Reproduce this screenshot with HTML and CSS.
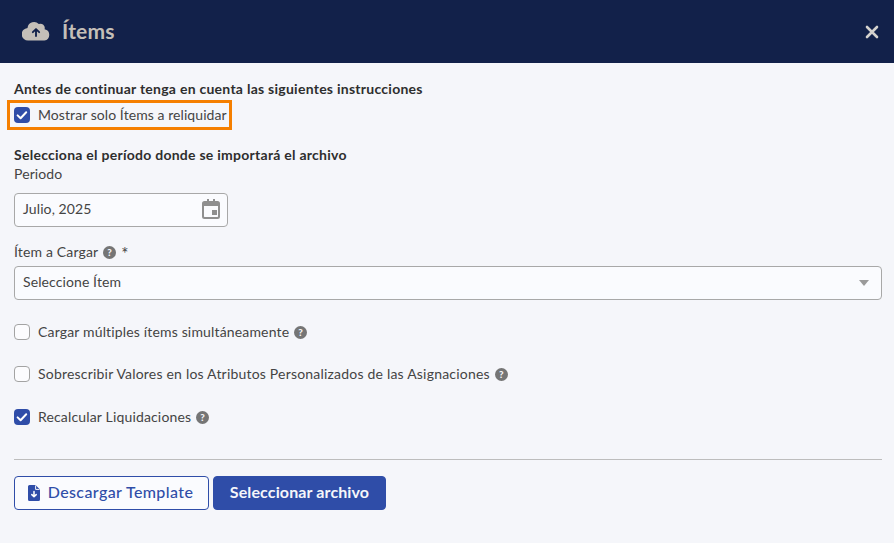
FILE: index.html
```html
<!DOCTYPE html>
<html lang="es">
<head>
<meta charset="utf-8">
<title>Ítems</title>
<link rel="stylesheet" href="styles.css">
</head>
<body>
<header class="head">
  <div class="head-title">
    <svg class="cloud" viewBox="0 0 30 22"><path fill="#c4bfb8" d="M24.2 9.6A4.6 4.6 0 0 0 18 4.1 7 7 0 0 0 6 7.6v.6A6.8 6.8 0 0 0 7 21.8h17a6.2 6.2 0 0 0 .2-12.2z"/><path fill="none" stroke="#12214a" stroke-width="2" stroke-linecap="round" stroke-linejoin="round" d="M15 17v-7M11.6 12.8 15 9.5l3.4 3.3"/></svg>
    <h1>Ítems</h1>
  </div>
  <svg class="close" viewBox="0 0 14 14"><path d="M2 2l10 10M12 2 2 12" stroke="#d4d2ce" stroke-width="2.6" stroke-linecap="round"/></svg>
</header>
<main class="body">
  <p class="strong first">Antes de continuar tenga en cuenta las siguientes instrucciones</p>
  <div class="highlight">
    <label class="check tight"><span class="box on"><svg viewBox="0 0 16 16"><path d="M3.6 8.4l3 2.9 5.6-6" fill="none" stroke="#fff" stroke-width="2" stroke-linecap="round" stroke-linejoin="round"/></svg></span><span>Mostrar solo Ítems a reliquidar</span></label>
  </div>
  <p class="strong second">Selecciona el período donde se importará el archivo</p>
  <p class="label">Periodo</p>
  <div class="field date"><span>Julio, 2025</span>
    <svg class="cal" viewBox="0 0 18 20"><path fill="#8f8f8f" d="M5 0h2v2h4V0h2v2h2.500A2.500 2.500 0 0 1 18 4.500v13a2.500 2.500 0 0 1-2.500 2.500h-13A2.500 2.500 0 0 1 0 17.500v-13A2.500 2.500 0 0 1 2.500 2H5zM2 7v10.500c0 .3.200.5.500.5h13c.3 0 .5-.2.500-.5V7zM10 11h5v5h-5z"/></svg>
  </div>
  <p class="label item-label">Ítem a Cargar <span class="help"><svg viewBox="0 0 12 12"><circle cx="6" cy="6" r="6" fill="#757575"/><text x="6" y="9.200" text-anchor="middle" class="q">?</text></svg></span> <span class="req">*</span></p>
  <div class="field select"><span>Seleccione Ítem</span><i class="caret"></i></div>
  <label class="check row r1"><span class="box"></span><span>Cargar múltiples ítems simultáneamente</span><span class="help"><svg viewBox="0 0 12 12"><circle cx="6" cy="6" r="6" fill="#757575"/><text x="6" y="9.200" text-anchor="middle" class="q">?</text></svg></span></label>
  <label class="check row r2"><span class="box"></span><span>Sobrescribir Valores en los Atributos Personalizados de las Asignaciones</span><span class="help"><svg viewBox="0 0 12 12"><circle cx="6" cy="6" r="6" fill="#757575"/><text x="6" y="9.200" text-anchor="middle" class="q">?</text></svg></span></label>
  <label class="check row r3"><span class="box on"><svg viewBox="0 0 16 16"><path d="M3.600 8.400l3 2.900 5.600-6" fill="none" stroke="#fff" stroke-width="2" stroke-linecap="round" stroke-linejoin="round"/></svg></span><span>Recalcular Liquidaciones</span><span class="help"><svg viewBox="0 0 12 12"><circle cx="6" cy="6" r="6" fill="#757575"/><text x="6" y="9.200" text-anchor="middle" class="q">?</text></svg></span></label>
  <hr class="rule">
  <div class="actions">
    <button class="btn outline"><svg viewBox="0 0 12 16"><path fill="#2f4da8" d="M1.500 0H7.500L12 4.500V14.500A1.500 1.500 0 0 1 10.500 16H1.500A1.500 1.500 0 0 1 0 14.500V1.500A1.500 1.500 0 0 1 1.500 0z"/><path d="M6 6.500v5M3.800 9.600 6 11.800l2.200-2.200" fill="none" stroke="#fff" stroke-width="1.500" stroke-linecap="round" stroke-linejoin="round"/><path d="M7.600 .4V4.400H11.600" fill="none" stroke="#f5f6fa" stroke-width="1"/></svg><span class="btn-text">Descargar Template</span></button>
    <button class="btn solid"><span class="btn-text">Seleccionar archivo</span></button>
  </div>
</main>
</body>
</html>
```
FILE: styles.css
```css
* { box-sizing: border-box; }
html, body { margin: 0; height: 100%; }
body {
  background: #f5f6fa;
  font-family: "Lato", "Noto Sans", sans-serif;
  font-size: 14px;
  color: #444;
  overflow: hidden;
}
p { margin: 0; }
.head {
  height: 63px;
  background: #12214a;
  display: flex;
  align-items: center;
  justify-content: space-between;
  padding: 0 15px 2px 22px;
}
.head-title { display: flex; align-items: center; gap: 12px; }
.cloud { width: 28px; height: 21px; display: block; }
.head h1 { margin: 0; font-size: 21px; font-weight: 700; color: #c4bfb8; line-height: 26px; letter-spacing: .2px; }
.close { width: 14px; height: 14px; display: block; margin-top: 3px; }
.body { padding: 0 12px 0 14px; }
.strong { font-weight: 700; color: #2e2e2e; font-size: 14px; line-height: 18px; letter-spacing: .26px; }
.first { padding-top: 17px; }
.highlight {
  margin: 2px 0 0 -7px;
  width: 225px;
  height: 30px;
  border: 3px solid #f57f00;
  padding-left: 4px;
  display: flex;
  align-items: center;
}
.check { display: flex; align-items: center; gap: 8px; letter-spacing: .16px; line-height: 18px; }
.check.tight { letter-spacing: .07px; }
.box {
  width: 16px;
  height: 16px;
  flex: none;
  border-radius: 4px;
  border: 1px solid #a3a3a3;
  background: #fcfcfe;
  display: block;
}
.box.on { background: #2f4da8; border: 0; }
.box svg { display: block; width: 16px; height: 16px; }
.second { margin-top: 16px; }
.label { line-height: 18px; margin-top: 1px; letter-spacing: .1px; }
.field {
  display: flex;
  align-items: center;
  justify-content: space-between;
  height: 34px;
  border: 1px solid #a8a8a8;
  border-radius: 4px;
  background: #fafbfe;
  padding: 0 8px;
  letter-spacing: .1px;
}
.field > span { padding-bottom: 3px; }
.date { width: 214px; margin-top: 10px; padding-right: 7px; }
.cal { width: 18px; height: 20px; display: block; margin-top: -2px; }
.item-label { margin-top: 16px; display: flex; align-items: center; gap: 5px; height: 18px; letter-spacing: .15px; }
.req { font-size: 17px; line-height: 18px; padding-top: 3px; }
.select { width: 868px; margin-top: 5px; padding-right: 12px; }
.caret { width: 0; height: 0; border: 5px solid transparent; border-top: 6px solid #9a9a9a; border-bottom: 0; }
.help { width: 13px; height: 13px; display: block; flex: none; }
.help svg { display: block; width: 13px; height: 13px; }
.q { font-family: "Lato", sans-serif; font-size: 9px; font-weight: 900; fill: #f5f6fa; }
.row .help { margin-left: -3px; }
.r1 { margin-top: 23px; }
.r2 { margin-top: 24px; letter-spacing: .2px; }
.r3 { margin-top: 25px; }
.rule { margin: 33px 0 0; border: 0; border-top: 1px solid #bdbdbd; width: 868px; }
.actions { display: flex; gap: 4px; margin-top: 16px; }
.btn {
  height: 34px;
  border-radius: 4px;
  font-family: inherit;
  font-size: 16px;
  border: 1px solid #2f4da8;
  display: flex;
  align-items: center;
  justify-content: center;
  padding: 0;
}
.btn-text { padding-bottom: 3px; }
.outline { width: 195px; background: #fafbfe; color: #2f4da8; gap: 8px; font-weight: 500; letter-spacing: .4px; padding-right: 2px; }
.outline svg { width: 12px; height: 16px; display: block; }
.solid { width: 173px; background: #2f4da8; color: #f5f6fa; font-weight: 700; letter-spacing: .12px; }
```
